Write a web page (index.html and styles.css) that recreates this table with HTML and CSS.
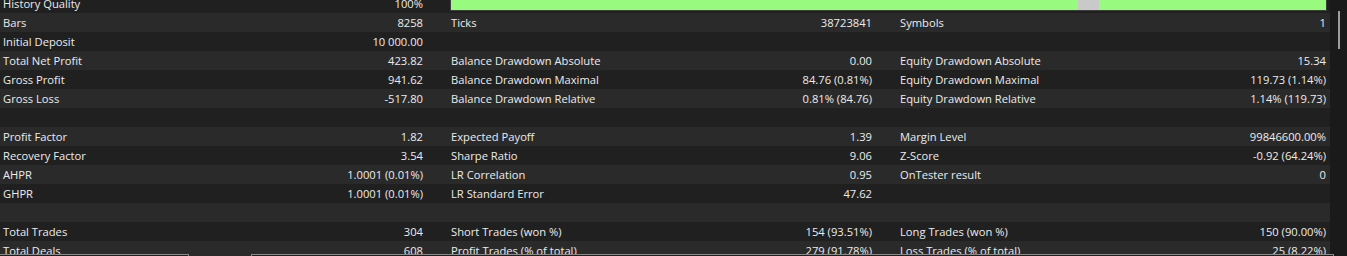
FILE: index.html
```html
<!DOCTYPE html>
<html>
<head>
<meta charset="utf-8">
<link rel="stylesheet" href="styles.css">
</head>
<body>
<div class="window">
  <div class="main">
    <div class="row dark">
      <div class="g g1"><span class="l">History Quality</span><span class="v">100%</span></div>
      <div class="g gbar">
        <div class="bar">
          <div class="seg green" style="width:627px"></div>
          <div class="seg gray" style="width:21px"></div>
          <div class="seg green fill"></div>
        </div>
      </div>
    </div>
    <div class="row light">
      <div class="g g1"><span class="l">Bars</span><span class="v">8258</span></div>
      <div class="g g2"><span class="l">Ticks</span><span class="v">38723841</span></div>
      <div class="g g3"><span class="l">Symbols</span><span class="v">1</span></div>
    </div>
    <div class="row dark">
      <div class="g g1"><span class="l">Initial Deposit</span><span class="v">10 000.00</span></div>
      <div class="g g2"></div>
      <div class="g g3"></div>
    </div>
    <div class="row light">
      <div class="g g1"><span class="l">Total Net Profit</span><span class="v">423.82</span></div>
      <div class="g g2"><span class="l">Balance Drawdown Absolute</span><span class="v">0.00</span></div>
      <div class="g g3"><span class="l">Equity Drawdown Absolute</span><span class="v">15.34</span></div>
    </div>
    <div class="row dark">
      <div class="g g1"><span class="l">Gross Profit</span><span class="v">941.62</span></div>
      <div class="g g2"><span class="l">Balance Drawdown Maximal</span><span class="v">84.76 (0.81%)</span></div>
      <div class="g g3"><span class="l">Equity Drawdown Maximal</span><span class="v">119.73 (1.14%)</span></div>
    </div>
    <div class="row light">
      <div class="g g1"><span class="l">Gross Loss</span><span class="v">-517.80</span></div>
      <div class="g g2"><span class="l">Balance Drawdown Relative</span><span class="v">0.81% (84.76)</span></div>
      <div class="g g3"><span class="l">Equity Drawdown Relative</span><span class="v">1.14% (119.73)</span></div>
    </div>
    <div class="row dark"></div>
    <div class="row light">
      <div class="g g1"><span class="l">Profit Factor</span><span class="v">1.82</span></div>
      <div class="g g2"><span class="l">Expected Payoff</span><span class="v">1.39</span></div>
      <div class="g g3"><span class="l">Margin Level</span><span class="v">99846600.00%</span></div>
    </div>
    <div class="row dark">
      <div class="g g1"><span class="l">Recovery Factor</span><span class="v">3.54</span></div>
      <div class="g g2"><span class="l">Sharpe Ratio</span><span class="v">9.06</span></div>
      <div class="g g3"><span class="l">Z-Score</span><span class="v">-0.92 (64.24%)</span></div>
    </div>
    <div class="row light">
      <div class="g g1"><span class="l">AHPR</span><span class="v">1.0001 (0.01%)</span></div>
      <div class="g g2"><span class="l">LR Correlation</span><span class="v">0.95</span></div>
      <div class="g g3"><span class="l">OnTester result</span><span class="v">0</span></div>
    </div>
    <div class="row dark">
      <div class="g g1"><span class="l">GHPR</span><span class="v">1.0001 (0.01%)</span></div>
      <div class="g g2"><span class="l">LR Standard Error</span><span class="v">47.62</span></div>
      <div class="g g3"></div>
    </div>
    <div class="row light"></div>
    <div class="row dark">
      <div class="g g1"><span class="l">Total Trades</span><span class="v">304</span></div>
      <div class="g g2"><span class="l">Short Trades (won %)</span><span class="v">154 (93.51%)</span></div>
      <div class="g g3"><span class="l">Long Trades (won %)</span><span class="v">150 (90.00%)</span></div>
    </div>
    <div class="row light">
      <div class="g g1"><span class="l">Total Deals</span><span class="v">608</span></div>
      <div class="g g2"><span class="l">Profit Trades (% of total)</span><span class="v">279 (91.78%)</span></div>
      <div class="g g3"><span class="l">Loss Trades (% of total)</span><span class="v">25 (8.22%)</span></div>
    </div>
  </div>
  <div class="scroll"><div class="thumb"></div></div>
</div>
<div class="tabs">
  <div class="tab t1"></div>
  <div class="tab t2"></div>
</div>
</body>
</html>
```
FILE: styles.css
```css
html, body {
  margin: 0;
  padding: 0;
  background: #1f1f1f;
  overflow: hidden;
  height: 256px;
}
body {
  font-family: "Open Sans", "Noto Sans", sans-serif;
  font-size: 11.2px;
  color: #ececec;
  position: relative;
}
.window {
  display: flex;
  width: 1347px;
  height: 256px;
}
.main {
  width: 1330px;
  margin-top: -6px;
}
.row {
  display: flex;
  height: 19px;
  line-height: 19px;
}
.row.dark { background: #202020; }
.row.light { background: #2a2a2a; }
.g {
  display: flex;
  justify-content: space-between;
  box-sizing: border-box;
  padding-left: 3px;
  white-space: nowrap;
}
.g1 { width: 448px; padding-right: 25px; }
.g2 { width: 449px; padding-right: 25px; }
.g3 { width: 433px; padding-right: 4px; }
.gbar {
  width: 879px;
  padding-left: 2px;
  padding-top: 1px;
}
.bar {
  display: flex;
  width: 877px;
  height: 16px;
  box-sizing: border-box;
  border: 1px solid #3e3e3e;
  border-top: none;
}
.seg { height: 100%; }
.green { background: #98fb80; }
.gray { background: #c9c9c9; }
.fill { flex: 1; }
.scroll {
  flex: 1;
  background: #1a1a1a;
}
.thumb {
  width: 2px;
  height: 38px;
  margin-top: 11px;
  margin-left: 8px;
  background: #9c9c9c;
}
.tabs {
  position: absolute;
  left: 0;
  top: 254px;
  width: 1334px;
  height: 2px;
}
.tab {
  position: absolute;
  top: 0;
  height: 4px;
  box-sizing: border-box;
  border: 1px solid #8a8a8a;
  border-bottom: none;
  background: #1f1f1f;
}
.t1 { left: -1px; width: 190px; }
.t2 { left: 251px; width: 1083px; }
```
